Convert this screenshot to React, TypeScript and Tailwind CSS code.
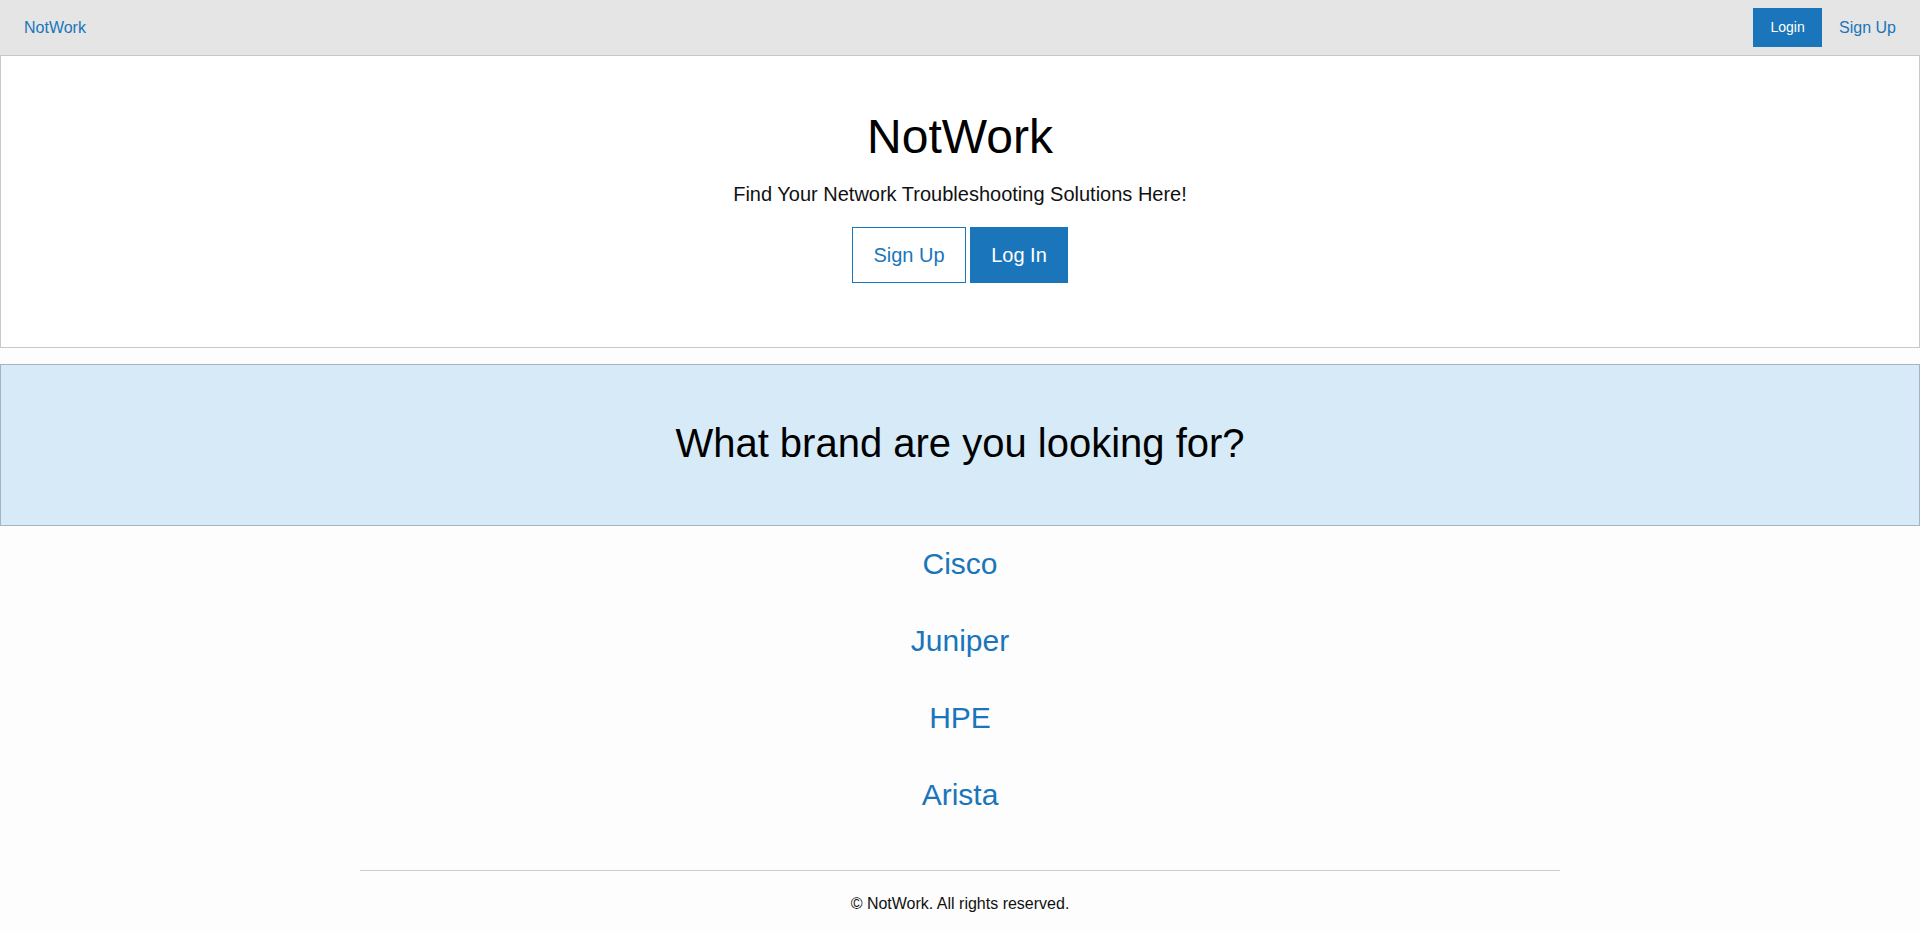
const brands = ['Cisco', 'Juniper', 'HPE', 'Arista'];

function NavBar() {
  return (
    <nav className="h-[55px] bg-[#e5e5e5] flex items-center justify-between pl-[24px] pr-[24px]">
      <a href="#" className="text-[16px] text-[#1a75bb]">NotWork</a>
      <div className="flex items-center gap-[17px]">
        <button className="h-[39px] w-[69px] bg-[#1a75bb] text-white text-[14px]">Login</button>
        <a href="#" className="text-[16px] text-[#1a75bb]">Sign Up</a>
      </div>
    </nav>
  );
}

function Hero() {
  return (
    <section className="bg-white border border-[#c8c8c8] pt-[55px] pb-[64px] flex flex-col items-center text-center">
      <h1 className="text-[48px] leading-[52px] text-black">NotWork</h1>
      <p className="mt-[20px] text-[20px] leading-[23px] text-[#111]">Find Your Network Troubleshooting Solutions Here!</p>
      <div className="mt-[21px] flex gap-[4px]">
        <button className="h-[56px] w-[114px] border border-[#1a75bb] bg-white text-[#1a75bb] text-[20px]">Sign Up</button>
        <button className="h-[56px] w-[98px] bg-[#1a75bb] text-white text-[20px]">Log In</button>
      </div>
    </section>
  );
}

export default function App() {
  return (
    <div className="min-h-[933px] bg-[#fdfdfd] font-['Liberation_Sans',Arial,sans-serif]">
      <NavBar />
      <Hero />
      <section className="mt-[16px] h-[162px] pb-[5px] bg-[#d6eaf8] border border-[#a3b4c4] flex items-center justify-center">
        <h2 className="text-[40px] leading-[46px] text-black">What brand are you looking for?</h2>
      </section>
      <ul className="mt-[21px] flex flex-col items-center gap-[43px]">
        {brands.map((b) => (
          <li key={b}>
            <a href="#" className="block text-[30px] leading-[34px] text-[#1a75bb]">{b}</a>
          </li>
        ))}
      </ul>
      <footer className="mx-auto mt-[58px] w-[1200px] border-t border-[#cccccc] pt-[21px] pb-[17px] text-center">
        <p className="text-[16px] leading-[24px] text-[#111]">© NotWork. All rights reserved.</p>
      </footer>
    </div>
  );
}
